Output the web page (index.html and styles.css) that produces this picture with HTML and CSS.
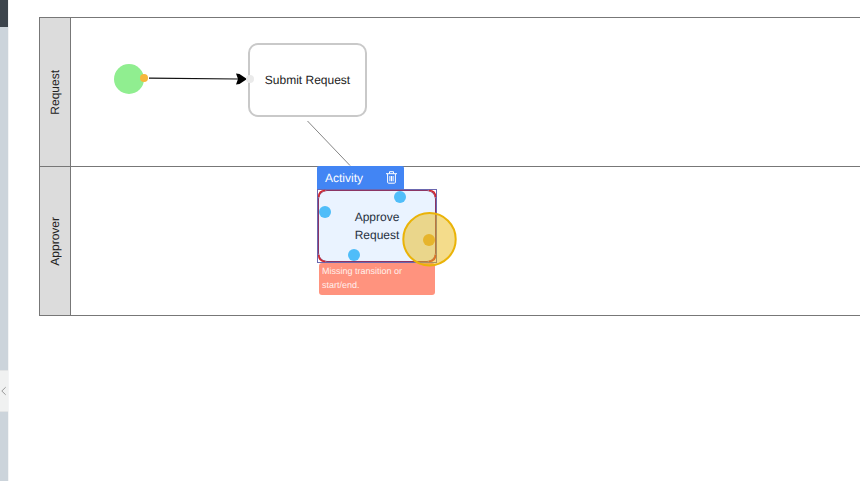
FILE: index.html
```html
<!DOCTYPE html>
<html lang="en">
<head>
<meta charset="utf-8">
<title>Workflow</title>
<link rel="stylesheet" href="styles.css">
</head>
<body>
<div class="app">
  <aside class="rail">
    <div class="rail-top"></div>
    <div class="rail-track"></div>
    <div class="rail-toggle">
      <svg width="8" height="10" viewBox="0 0 8 10"><path d="M5.7 1.2 1.8 5l3.9 3.8" fill="none" stroke="#999" stroke-width="1"/></svg>
    </div>
    <div class="rail-track"></div>
  </aside>
  <main class="canvas">
    <section class="lane"><h2 class="lane-title"><span>Request</span></h2></section>
    <section class="lane"><h2 class="lane-title"><span>Approver</span></h2></section>

    <svg class="links" width="852" height="481" viewBox="8 0 852 481">
      <path d="M149 78.2 238 79" stroke="#111" stroke-width="1.2"/>
      <path d="M307.5 121 350 165.5" stroke="#858585" stroke-width="1"/>
      <path d="M236 73.5 239.5 74 247 79 239.5 84 236 84.5 238 79z" fill="#000"/>
      <circle cx="129" cy="79" r="15" fill="#90ee90"/>
      <circle cx="144" cy="78" r="4" fill="#f6b73c"/>
    </svg>

    <div class="node node-submit">Submit Request<i class="port"></i></div>

    <div class="selection">
      <div class="toolbar">
        <span>Activity</span>
        <svg width="11" height="13" viewBox="0 0 11 13" fill="none" stroke="#fff"><path d="M0 2.7h11M3.5 2.5V.7h4v1.8M1.6 3v8.2q0 1 1 1h5.8q1 0 1-1V3M3.9 5v5.3M5.5 5v5.3M7.1 5v5.3" stroke-width="1"/></svg>
      </div>
      <div class="frame"><div class="node-approve">Approve<br>Request</div></div>
      <div class="error">Missing transition or start/end.</div>
    </div>

    <svg class="links" width="852" height="481" viewBox="8 0 852 481">
      <path d="M318.7 197q0-6.5 6.5-6.5M429 190.5q6.5 0 6.5 6.5M318.7 255q0 6.5 6.5 6.5M429 261.5q6.5 0 6.5-6.5" fill="none" stroke="#cf242c" stroke-width="1.6"/>
      <g fill="#4fbdf9">
        <circle cx="400" cy="197" r="6"/>
        <circle cx="325" cy="212" r="6"/>
        <circle cx="354" cy="255" r="6"/>
      </g>
      <circle cx="429.5" cy="239.3" r="26.2" fill="#eab918" fill-opacity=".5" stroke="#eab308" stroke-width="2"/>
      <circle cx="429" cy="240" r="6" fill="#e6b42c"/>
    </svg>
  </main>
</div>
</body>
</html>
```

FILE: styles.css
```css
* { box-sizing: border-box; }
body {
  margin: 0;
  background: #fff;
  color: #222;
  font: 12px/18px "Liberation Sans", Arial, sans-serif;
  text-rendering: geometricPrecision;
  overflow: hidden;
}
.app { display: flex; height: 481px; }
.rail {
  display: grid;
  grid-template-rows: 27px 343px 42px 1fr;
  width: 8px;
  flex: none;
}
.rail-top { background: #3c444c; }
.rail-track { background: #ccd4db; }
.rail-toggle {
  display: flex;
  align-items: center;
  width: 9px;
  background: #f0f1f1;
  border: solid #e2e4e5;
  border-width: 1px 1px 1px 0;
}
.canvas {
  position: relative;
  flex: 1;
  padding: 17px 0 0 30px;
  border-left: 1px solid #f3f4f5;
}
.lane {
  display: flex;
  height: 150px;
  border: 1px solid #777;
  border-right: 0;
}
.lane + .lane { margin-top: -1px; }
.lane-title {
  display: flex;
  align-items: center;
  justify-content: center;
  width: 31px;
  margin: 0;
  background: #dcdcdc;
  border-right: 1px solid #777;
  font: inherit;
}
.lane-title span { writing-mode: vertical-rl; transform: rotate(180deg); }
.links { position: absolute; top: 0; left: -1px; }
.node {
  position: absolute;
  display: flex;
  align-items: center;
  justify-content: center;
  background: #fff;
}
.node-submit {
  left: 239px;
  top: 43px;
  width: 119px;
  height: 74px;
  border: 2px solid #c9c9c9;
  border-radius: 10px;
}
.port {
  position: absolute;
  left: -4px;
  top: 30px;
  width: 8px;
  height: 8px;
  border-radius: 50%;
  background: #eaeaea;
}
.selection { position: absolute; left: 308px; top: 166px; width: 120px; }
.toolbar {
  display: flex;
  align-items: center;
  justify-content: space-between;
  width: 87px;
  height: 23px;
  padding: 0 7px 0 8px;
  border-radius: 2px 2px 0 0;
  background: #4285f4;
  color: #fff;
}
.toolbar span { padding-top: 1px; }
.frame { height: 74px; border: 1px solid #6b68b0; background: #fff; }
.node-approve {
  display: flex;
  align-items: center;
  justify-content: center;
  height: 72px;
  border: 1px solid #8b3564;
  border-radius: 9px;
  background: #eaf3ff;
  color: #26303e;
}
.error {
  width: 116px;
  height: 32px;
  margin-left: 2px;
  padding: 1px 3px;
  border-radius: 3px;
  background: #ff937e;
  color: #fff0ec;
  font-size: 9px;
  line-height: 14px;
}
```
